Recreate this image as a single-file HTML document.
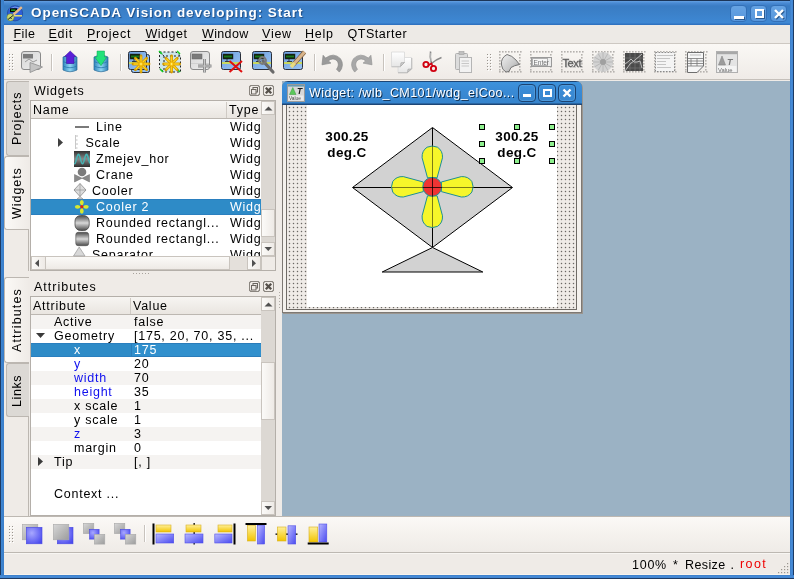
<!DOCTYPE html>
<html><head><meta charset="utf-8">
<style>
*{box-sizing:border-box;margin:0;padding:0}
html,body{width:794px;height:579px;overflow:hidden;background:#efebe7;font-family:"Liberation Sans",sans-serif;font-size:12px;color:#000}
.a{position:absolute}
.t{position:absolute;white-space:pre;line-height:14px;letter-spacing:0.75px;font-size:12.5px}
#titlebar{left:0;top:0;width:794px;height:25px;background:linear-gradient(#1c3558 0px,#1c3558 1px,#63a0e2 1px,#4a8ad4 3px,#3a7cc4 6px,#3b80c8 12px,#3e88d4 23px,#2f72c0 24px,#2f72c0 25px)}
#lborder{left:0;top:0;width:4px;height:579px;background:linear-gradient(90deg,#1d3a63 0,#1d3a63 1px,#3e86d2 1px,#3a7dc8 4px)}
#rborder{left:790px;top:0;width:4px;height:579px;background:linear-gradient(90deg,#3a7dc8 0,#4a8fdc 2px,#3a7dc8 3px,#1d3a63 3px)}
#bborder{left:0;top:575px;width:794px;height:4px;background:linear-gradient(#3a7dc8 0,#4a8fdc 2px,#3a7dc8 3px,#1d3a63 3px)}
.wbtn{position:absolute;top:5px;width:17px;height:17px;border:1px solid #3370b8;border-radius:4px;background:linear-gradient(#66a3e3,#5897dc)}
#title{left:31px;top:4px;font-weight:bold;font-size:13.5px;letter-spacing:0.95px;color:#fff;text-shadow:1px 1px 1px #1e4a80;line-height:18px}
#menubar{left:4px;top:25px;width:786px;height:18px;background:#edeae6}
#menuline{left:4px;top:43px;width:786px;height:1px;background:#cdc8c2}
#toolbar{left:4px;top:44px;width:786px;height:35px;background:linear-gradient(#faf8f5,#efebe7)}
#tbline{left:4px;top:79px;width:786px;height:1px;background:#c5c0ba}
#mdi{left:282px;top:81px;width:508px;height:435px;background:#9bb2c4}
.u{text-decoration:underline;text-underline-offset:2px}

.tab{position:absolute;border:1px solid #bcb7b1;border-right:none;border-radius:3px 0 0 3px}
.tabu{background:#dcd9d5}
.tabs{background:linear-gradient(90deg,#fbf9f6,#efebe7)}
.vt{position:absolute;white-space:pre;transform:rotate(-90deg);transform-origin:0 0;line-height:14px;letter-spacing:0.75px;font-size:12.5px}
.frame{position:absolute;border:1px solid #b4afa9;background:#fff}
.hdr{position:absolute;background:linear-gradient(#f7f5f2,#e9e5e0);border-bottom:1px solid #bcb7b1}
.sb{position:absolute;background:#dcd8d3}
.sbtn{position:absolute;background:linear-gradient(90deg,#fbfaf8,#eeeae6);border:1px solid #c9c4be}
.dbtn{position:absolute;width:11px;height:11px;border:1px solid #8a857f;border-radius:2px}
.row{position:absolute;left:31px;width:230px;height:16px}
.sel{background:#2e8bc7;color:#fff;box-shadow:inset 0 1px 0 #2a7fbf,inset 0 -1px 0 #2a7fbf}
.arow{position:absolute;left:31px;width:230px;height:14px}
.alt{background:#f5f3f1}
.blue{color:#1010ee}

.grid{background-color:#efebe7;background-image:radial-gradient(circle at 2.5px 2.5px,#6a6864 0.75px,transparent 1.05px);background-size:4px 4px}
.swb{position:absolute;top:84px;width:18px;height:18px;border:1px solid #1b4373;border-radius:4px;box-shadow:inset 0 0 0 1px #4d99dc}
</style></head><body><div id="root" style="position:absolute;left:0;top:0;width:794px;height:579px;overflow:hidden;will-change:transform;background:#efebe7">
<div class="a" id="titlebar"></div>
<div class="a" id="menubar"></div>
<div class="a" id="menuline"></div>
<div class="a" id="toolbar"></div>
<div class="a" id="tbline"></div>
<div class="a" id="mdi"></div>
<div class="a" id="lborder"></div>
<div class="a" id="rborder"></div>
<div class="a" id="bborder"></div>

<div class="t" id="title">OpenSCADA Vision developing: Start</div>
<div class="wbtn" style="left:730px"><div class="a" style="left:3px;top:10px;width:10px;height:3px;background:#fff;box-shadow:1px 1px 0 #2a5a90"></div></div>
<div class="wbtn" style="left:750px"><div class="a" style="left:4px;top:3px;width:9px;height:9px;border:2px solid #fff;box-shadow:1px 1px 0 #2a5a90"></div></div>
<div class="wbtn" style="left:770px"><svg class="a" style="left:0;top:0" width="17" height="17"><path d="M5 5L13 13M13 5L5 13" stroke="#2a5a90" stroke-width="2.4"/><path d="M4 4L12 12M12 4L4 12" stroke="#fff" stroke-width="2.4"/></svg></div>
<svg class="a" style="left:0;top:0" width="30" height="25">
<circle cx="15" cy="13.3" r="7.6" fill="#2f5fd8" stroke="#1a3a8a" stroke-width="0.6"/>
<path d="M9.5 9 Q15 5.6 20 8" stroke="#9ab4f0" stroke-width="1" fill="none" opacity="0.7"/>
<rect x="10" y="8.3" width="7" height="3.8" fill="#000"/><rect x="11" y="9.4" width="4.5" height="1.6" fill="#1c9a1c"/>
<path d="M13.5 14.5 L21.8 7.2" stroke="#e8b888" stroke-width="2.4"/>
<path d="M14 15.8 H22" stroke="#e8e070" stroke-width="1.5"/>
<circle cx="10.5" cy="17.3" r="3.6" fill="#c8d870" stroke="#6a7a30" stroke-width="0.5"/><path d="M8 19.5 L13 15.5 M10 17 L11.5 19" stroke="#222" stroke-width="1"/>
</svg>

<!-- TOOLBAR START --><svg class="a" style="left:0;top:0" width="794" height="80"><defs>
<linearGradient id="gblue" x1="0" y1="0" x2="1" y2="1"><stop offset="0" stop-color="#6a9fe0"/><stop offset="1" stop-color="#9cc4f2"/></linearGradient>
<linearGradient id="ggrey" x1="0" y1="0" x2="1" y2="1"><stop offset="0" stop-color="#d6d6d6"/><stop offset="1" stop-color="#eeeeee"/></linearGradient>
<radialGradient id="gstar"><stop offset="0" stop-color="#fffbd0"/><stop offset="0.4" stop-color="#ffd21a"/><stop offset="1" stop-color="#e0a000"/></radialGradient>
<linearGradient id="gcyl" x1="0" y1="0" x2="1" y2="0"><stop offset="0" stop-color="#2f86bd"/><stop offset="0.5" stop-color="#8fd6f4"/><stop offset="1" stop-color="#2f7fb5"/></linearGradient>
<linearGradient id="gbar" x1="0" y1="0" x2="1" y2="1"><stop offset="0" stop-color="#b8b8ff"/><stop offset="1" stop-color="#4a4af0"/></linearGradient>
<radialGradient id="gblu2" cx="0.35" cy="0.35" r="0.8"><stop offset="0" stop-color="#a8a8ff"/><stop offset="1" stop-color="#4848ee"/></radialGradient>
<linearGradient id="ggry2" x1="0" y1="0" x2="1" y2="1"><stop offset="0" stop-color="#d8d8d8"/><stop offset="1" stop-color="#9c9c9c"/></linearGradient>
<linearGradient id="gyel" x1="0" y1="0" x2="0" y2="1"><stop offset="0" stop-color="#fff09a"/><stop offset="1" stop-color="#f2c400"/></linearGradient>
</defs><rect x="9" y="54" width="1" height="1" fill="#9a958f"/><rect x="10" y="55" width="1" height="1" fill="#fff"/><rect x="12" y="54" width="1" height="1" fill="#9a958f"/><rect x="13" y="55" width="1" height="1" fill="#fff"/><rect x="9" y="57" width="1" height="1" fill="#9a958f"/><rect x="10" y="58" width="1" height="1" fill="#fff"/><rect x="12" y="57" width="1" height="1" fill="#9a958f"/><rect x="13" y="58" width="1" height="1" fill="#fff"/><rect x="9" y="60" width="1" height="1" fill="#9a958f"/><rect x="10" y="61" width="1" height="1" fill="#fff"/><rect x="12" y="60" width="1" height="1" fill="#9a958f"/><rect x="13" y="61" width="1" height="1" fill="#fff"/><rect x="9" y="63" width="1" height="1" fill="#9a958f"/><rect x="10" y="64" width="1" height="1" fill="#fff"/><rect x="12" y="63" width="1" height="1" fill="#9a958f"/><rect x="13" y="64" width="1" height="1" fill="#fff"/><rect x="9" y="66" width="1" height="1" fill="#9a958f"/><rect x="10" y="67" width="1" height="1" fill="#fff"/><rect x="12" y="66" width="1" height="1" fill="#9a958f"/><rect x="13" y="67" width="1" height="1" fill="#fff"/><rect x="9" y="69" width="1" height="1" fill="#9a958f"/><rect x="10" y="70" width="1" height="1" fill="#fff"/><rect x="12" y="69" width="1" height="1" fill="#9a958f"/><rect x="13" y="70" width="1" height="1" fill="#fff"/><rect x="21.5" y="51.5" width="19" height="18" rx="2.5" fill="url(#ggrey)" stroke="#8a8a8a"/><rect x="23" y="54" width="10" height="4.5" fill="#7c7c7c"/><path d="M25 62 L29 59 L33 62 L37 60" stroke="#9a9a9a" fill="none"/><path d="M30 62.5 L30 72.5 L42.5 67 Z" fill="#c4c4c4" stroke="#8e8e8e" stroke-width="0.8"/><rect x="51" y="54" width="1" height="17" fill="#c8c3bd"/><rect x="52" y="54" width="1" height="17" fill="#fff"/><path d="M63 57 Q70 53.5 77 57 L77 70 Q70 73.5 63 70 Z" fill="url(#gcyl)" stroke="#2a6a98" stroke-width="0.7"/><path d="M63 61.5 Q70 65 77 61.5 M63 66 Q70 69.5 77 66" stroke="#2a77ad" fill="none" stroke-width="0.8"/><path d="M70.2 51 L76 56.5 L74 56.5 L74 63.5 L66.5 63.5 L66.5 56.5 L64.5 56.5 Z" fill="#5a1fd8" stroke="#3a109a" stroke-width="0.5"/><path d="M94 57 Q101 53.5 108 57 L108 70 Q101 73.5 94 70 Z" fill="url(#gcyl)" stroke="#2a6a98" stroke-width="0.7"/><path d="M94 61.5 Q101 65 108 61.5 M94 66 Q101 69.5 108 66" stroke="#2a77ad" fill="none" stroke-width="0.8"/><path d="M97 51 L104.5 51 L104.5 57 L106.8 57 L101 65.7 L94.7 57 L97 57 Z" fill="#22e27a" stroke="#10a050" stroke-width="0.5"/><rect x="120" y="54" width="1" height="17" fill="#c8c3bd"/><rect x="121" y="54" width="1" height="17" fill="#fff"/><rect x="131.5" y="54.5" width="18" height="18" rx="2" fill="#8fbdf3" stroke="#2a2f3a"/><rect x="128.5" y="51.5" width="18" height="18" rx="2" fill="url(#gblue)" stroke="#2a2f3a"/><rect x="130" y="54" width="10" height="5" fill="#0a1a0a" stroke="#333" stroke-width="0.5"/><rect x="131" y="55.5" width="8" height="2" fill="#1fa01f" opacity="0.7"/><rect x="129" y="62" width="17" height="2" fill="#c8d860"/><path d="M134 59 V61.5 M132 61.5 H137" stroke="#222" stroke-width="0.8"/><path d="M133.00 64.00 L149.00 64.00" stroke="#d49a00" stroke-width="2.8" stroke-linecap="round"/><path d="M135.34 58.34 L146.66 69.66" stroke="#d49a00" stroke-width="2.8" stroke-linecap="round"/><path d="M141.00 56.00 L141.00 72.00" stroke="#d49a00" stroke-width="2.8" stroke-linecap="round"/><path d="M146.66 58.34 L135.34 69.66" stroke="#d49a00" stroke-width="2.8" stroke-linecap="round"/><path d="M134.00 64.00 L148.00 64.00" stroke="#ffd21a" stroke-width="1.3" stroke-linecap="round"/><path d="M136.05 59.05 L145.95 68.95" stroke="#ffd21a" stroke-width="1.3" stroke-linecap="round"/><path d="M141.00 57.00 L141.00 71.00" stroke="#ffd21a" stroke-width="1.3" stroke-linecap="round"/><path d="M145.95 59.05 L136.05 68.95" stroke="#ffd21a" stroke-width="1.3" stroke-linecap="round"/><circle cx="141" cy="64" r="2.6" fill="url(#gstar)"/><path d="M159.5 52 L176 52 L180.5 56 L180.5 72 L164 72 L159.5 68 Z" fill="#c6e3ea" opacity="0.9"/><path d="M159.5 52 L176 52 L180.5 56 L180.5 72 L164 72 L159.5 68 Z M159.5 52 L164 56 L180.5 56 M164 56 L164 72" fill="none" stroke="#222" stroke-dasharray="2 2" stroke-width="1"/><path d="M159 51 l3 3 M177 51 l3 3 M160 69 l3 3 M177 69 l3 3" stroke="#10d020" stroke-width="1.5"/><path d="M163.60 64.00 L179.60 64.00" stroke="#d49a00" stroke-width="2.8" stroke-linecap="round"/><path d="M165.94 58.34 L177.26 69.66" stroke="#d49a00" stroke-width="2.8" stroke-linecap="round"/><path d="M171.60 56.00 L171.60 72.00" stroke="#d49a00" stroke-width="2.8" stroke-linecap="round"/><path d="M177.26 58.34 L165.94 69.66" stroke="#d49a00" stroke-width="2.8" stroke-linecap="round"/><path d="M164.60 64.00 L178.60 64.00" stroke="#ffd21a" stroke-width="1.3" stroke-linecap="round"/><path d="M166.65 59.05 L176.55 68.95" stroke="#ffd21a" stroke-width="1.3" stroke-linecap="round"/><path d="M171.60 57.00 L171.60 71.00" stroke="#ffd21a" stroke-width="1.3" stroke-linecap="round"/><path d="M176.55 59.05 L166.65 68.95" stroke="#ffd21a" stroke-width="1.3" stroke-linecap="round"/><circle cx="171.6" cy="64" r="2.6" fill="url(#gstar)"/><rect x="190.5" y="51.5" width="19" height="18" rx="2.5" fill="url(#ggrey)" stroke="#8a8a8a"/><rect x="192" y="54" width="10" height="5" fill="#7a7a7a" stroke="#666" stroke-width="0.5"/><rect x="191" y="63" width="18" height="1" fill="#d0d0d0"/><path d="M204.5 59 V72.6 M198 66 H211.5" stroke="#8a8a8a" stroke-width="3"/><path d="M204.5 59 V72.6 M198 66 H211.5" stroke="#c8c8c8" stroke-width="1.2"/><rect x="221.5" y="51.5" width="19" height="18" rx="2" fill="url(#gblue)" stroke="#2a2f3a"/><rect x="223" y="54" width="10" height="5" fill="#0a1a0a" stroke="#333" stroke-width="0.5"/><rect x="224" y="55.5" width="8" height="2" fill="#1fa01f" opacity="0.7"/><rect x="222" y="62" width="18" height="2" fill="#c8d860"/><path d="M227 59 V61.5 M225 61.5 H230" stroke="#222" stroke-width="0.8"/><path d="M229.5 61 L242 72 M242 61 L229.5 72" stroke="#e01010" stroke-width="2"/><rect x="252.5" y="51.5" width="19" height="18" rx="2" fill="url(#gblue)" stroke="#2a2f3a"/><rect x="254" y="54" width="10" height="5" fill="#0a1a0a" stroke="#333" stroke-width="0.5"/><rect x="255" y="55.5" width="8" height="2" fill="#1fa01f" opacity="0.7"/><rect x="253" y="62" width="18" height="2" fill="#c8d860"/><path d="M258 59 V61.5 M256 61.5 H261" stroke="#222" stroke-width="0.8"/><path d="M263 61 L273 72" stroke="#6a6a6a" stroke-width="3.2" stroke-linecap="round"/><circle cx="262.5" cy="60.5" r="3.3" fill="none" stroke="#7a7a7a" stroke-width="2.2"/><rect x="283.5" y="51.5" width="19" height="18" rx="2" fill="url(#gblue)" stroke="#2a2f3a"/><rect x="285" y="54" width="10" height="5" fill="#0a1a0a" stroke="#333" stroke-width="0.5"/><rect x="286" y="55.5" width="8" height="2" fill="#1fa01f" opacity="0.7"/><rect x="284" y="62" width="18" height="2" fill="#c8d860"/><path d="M289 59 V61.5 M287 61.5 H292" stroke="#222" stroke-width="0.8"/><path d="M293 65 L304.5 52" stroke="#7a5a3a" stroke-width="4.2" stroke-linecap="butt"/><path d="M293 65 L304.5 52" stroke="#d9b48a" stroke-width="3"/><path d="M291 67 L294.5 63" stroke="#e8dc80" stroke-width="3.5"/><rect x="314" y="54" width="1" height="17" fill="#c8c3bd"/><rect x="315" y="54" width="1" height="17" fill="#fff"/><g transform="translate(331.5 62) scale(1.12) translate(-331.5 -62)"><path d="M324 56 L323 64.5 L331 63 L328.6 61 Q333 57.5 336.5 61 Q339 64.5 336 68.5 L338.5 71 Q343.5 65 339.5 59 Q333.5 53 326.2 58.5 Z" fill="#9a9a9a" stroke="#878787" stroke-width="0.6"/></g><g transform="translate(362.5 62) scale(1.12) translate(-362.5 -62)"><path d="M370 56 L371 64.5 L363 63 L365.4 61 Q361 57.5 357.5 61 Q355 64.5 358 68.5 L355.5 71 Q350.5 65 354.5 59 Q360.5 53 367.8 58.5 Z" fill="#a8a8a8" stroke="#949494" stroke-width="0.6"/></g><rect x="383" y="54" width="1" height="17" fill="#c8c3bd"/><rect x="384" y="54" width="1" height="17" fill="#fff"/><defs><linearGradient id="gsheet" x1="0" y1="0" x2="0" y2="1"><stop offset="0" stop-color="#ffffff"/><stop offset="1" stop-color="#e6e6e6"/></linearGradient></defs><path d="M398 57.5 H411.5 V69 L407.5 72.5 H398 Z" fill="url(#gsheet)" stroke="#d8d8d8" stroke-width="0.8"/><path d="M407.5 72.5 L408 69.2 L411.5 69 Z" fill="#cfcfcf" stroke="#9a9a9a" stroke-width="0.6"/><path d="M398 72.8 H407.5 M411.8 58 V69" stroke="#b8b8b8"/><path d="M391.5 52 H404.5 V62.5 L400.5 66.5 H391.5 Z" fill="url(#gsheet)" stroke="#d8d8d8" stroke-width="0.8"/><path d="M400.5 66.5 L401 62.8 L404.5 62.5 Z" fill="#cfcfcf" stroke="#9a9a9a" stroke-width="0.6"/><path d="M391.5 66.8 H400.5" stroke="#c0c0c0"/><path d="M430.6 51.5 Q429.5 57 431.5 63.5" stroke="#8a8a8a" stroke-width="1.6" fill="none"/><path d="M441.5 57.5 Q436 59.5 431.5 63.5" stroke="#8a8a8a" stroke-width="1.5" fill="none"/><path d="M430.9 53 Q430.4 57 431.2 61" stroke="#e8e8e8" stroke-width="0.6" fill="none"/><circle cx="426" cy="64.5" r="2.6" fill="none" stroke="#d00010" stroke-width="1.9"/><circle cx="433.5" cy="68.5" r="2.6" fill="none" stroke="#d00010" stroke-width="1.9"/><path d="M428 65.5 L431.5 63.5 L432.5 66" stroke="#d00010" stroke-width="1.6" fill="none"/><rect x="455.5" y="53.5" width="12" height="16" rx="1" fill="#dcdcdc" stroke="#b0b0b0"/><rect x="459" y="51.5" width="5" height="3" fill="#c0c0c0" stroke="#a0a0a0" stroke-width="0.6"/><rect x="459.5" y="57.5" width="12" height="15" fill="#f2f2f2" stroke="#b5b5b5"/><path d="M461.5 61 H469 M461.5 63.5 H469 M461.5 66 H469" stroke="#c8c8c8"/><rect x="487" y="54" width="1" height="1" fill="#9a958f"/><rect x="488" y="55" width="1" height="1" fill="#fff"/><rect x="490" y="54" width="1" height="1" fill="#9a958f"/><rect x="491" y="55" width="1" height="1" fill="#fff"/><rect x="487" y="57" width="1" height="1" fill="#9a958f"/><rect x="488" y="58" width="1" height="1" fill="#fff"/><rect x="490" y="57" width="1" height="1" fill="#9a958f"/><rect x="491" y="58" width="1" height="1" fill="#fff"/><rect x="487" y="60" width="1" height="1" fill="#9a958f"/><rect x="488" y="61" width="1" height="1" fill="#fff"/><rect x="490" y="60" width="1" height="1" fill="#9a958f"/><rect x="491" y="61" width="1" height="1" fill="#fff"/><rect x="487" y="63" width="1" height="1" fill="#9a958f"/><rect x="488" y="64" width="1" height="1" fill="#fff"/><rect x="490" y="63" width="1" height="1" fill="#9a958f"/><rect x="491" y="64" width="1" height="1" fill="#fff"/><rect x="487" y="66" width="1" height="1" fill="#9a958f"/><rect x="488" y="67" width="1" height="1" fill="#fff"/><rect x="490" y="66" width="1" height="1" fill="#9a958f"/><rect x="491" y="67" width="1" height="1" fill="#fff"/><rect x="487" y="69" width="1" height="1" fill="#9a958f"/><rect x="488" y="70" width="1" height="1" fill="#fff"/><rect x="490" y="69" width="1" height="1" fill="#9a958f"/><rect x="491" y="70" width="1" height="1" fill="#fff"/><rect x="499" y="51" width="1.6" height="1.6" fill="#b5b2ae"/><rect x="499" y="71" width="1.6" height="1.6" fill="#b5b2ae"/><rect x="502" y="51" width="1.6" height="1.6" fill="#b5b2ae"/><rect x="502" y="71" width="1.6" height="1.6" fill="#b5b2ae"/><rect x="505" y="51" width="1.6" height="1.6" fill="#b5b2ae"/><rect x="505" y="71" width="1.6" height="1.6" fill="#b5b2ae"/><rect x="508" y="51" width="1.6" height="1.6" fill="#b5b2ae"/><rect x="508" y="71" width="1.6" height="1.6" fill="#b5b2ae"/><rect x="511" y="51" width="1.6" height="1.6" fill="#b5b2ae"/><rect x="511" y="71" width="1.6" height="1.6" fill="#b5b2ae"/><rect x="514" y="51" width="1.6" height="1.6" fill="#b5b2ae"/><rect x="514" y="71" width="1.6" height="1.6" fill="#b5b2ae"/><rect x="517" y="51" width="1.6" height="1.6" fill="#b5b2ae"/><rect x="517" y="71" width="1.6" height="1.6" fill="#b5b2ae"/><rect x="520" y="51" width="1.6" height="1.6" fill="#b5b2ae"/><rect x="520" y="71" width="1.6" height="1.6" fill="#b5b2ae"/><rect x="499" y="54" width="1.6" height="1.6" fill="#b5b2ae"/><rect x="519" y="54" width="1.6" height="1.6" fill="#b5b2ae"/><rect x="499" y="57" width="1.6" height="1.6" fill="#b5b2ae"/><rect x="519" y="57" width="1.6" height="1.6" fill="#b5b2ae"/><rect x="499" y="60" width="1.6" height="1.6" fill="#b5b2ae"/><rect x="519" y="60" width="1.6" height="1.6" fill="#b5b2ae"/><rect x="499" y="63" width="1.6" height="1.6" fill="#b5b2ae"/><rect x="519" y="63" width="1.6" height="1.6" fill="#b5b2ae"/><rect x="499" y="66" width="1.6" height="1.6" fill="#b5b2ae"/><rect x="519" y="66" width="1.6" height="1.6" fill="#b5b2ae"/><rect x="499" y="69" width="1.6" height="1.6" fill="#b5b2ae"/><rect x="519" y="69" width="1.6" height="1.6" fill="#b5b2ae"/><rect x="530" y="51" width="1.6" height="1.6" fill="#b5b2ae"/><rect x="530" y="71" width="1.6" height="1.6" fill="#b5b2ae"/><rect x="533" y="51" width="1.6" height="1.6" fill="#b5b2ae"/><rect x="533" y="71" width="1.6" height="1.6" fill="#b5b2ae"/><rect x="536" y="51" width="1.6" height="1.6" fill="#b5b2ae"/><rect x="536" y="71" width="1.6" height="1.6" fill="#b5b2ae"/><rect x="539" y="51" width="1.6" height="1.6" fill="#b5b2ae"/><rect x="539" y="71" width="1.6" height="1.6" fill="#b5b2ae"/><rect x="542" y="51" width="1.6" height="1.6" fill="#b5b2ae"/><rect x="542" y="71" width="1.6" height="1.6" fill="#b5b2ae"/><rect x="545" y="51" width="1.6" height="1.6" fill="#b5b2ae"/><rect x="545" y="71" width="1.6" height="1.6" fill="#b5b2ae"/><rect x="548" y="51" width="1.6" height="1.6" fill="#b5b2ae"/><rect x="548" y="71" width="1.6" height="1.6" fill="#b5b2ae"/><rect x="551" y="51" width="1.6" height="1.6" fill="#b5b2ae"/><rect x="551" y="71" width="1.6" height="1.6" fill="#b5b2ae"/><rect x="530" y="54" width="1.6" height="1.6" fill="#b5b2ae"/><rect x="550" y="54" width="1.6" height="1.6" fill="#b5b2ae"/><rect x="530" y="57" width="1.6" height="1.6" fill="#b5b2ae"/><rect x="550" y="57" width="1.6" height="1.6" fill="#b5b2ae"/><rect x="530" y="60" width="1.6" height="1.6" fill="#b5b2ae"/><rect x="550" y="60" width="1.6" height="1.6" fill="#b5b2ae"/><rect x="530" y="63" width="1.6" height="1.6" fill="#b5b2ae"/><rect x="550" y="63" width="1.6" height="1.6" fill="#b5b2ae"/><rect x="530" y="66" width="1.6" height="1.6" fill="#b5b2ae"/><rect x="550" y="66" width="1.6" height="1.6" fill="#b5b2ae"/><rect x="530" y="69" width="1.6" height="1.6" fill="#b5b2ae"/><rect x="550" y="69" width="1.6" height="1.6" fill="#b5b2ae"/><rect x="561" y="51" width="1.6" height="1.6" fill="#b5b2ae"/><rect x="561" y="71" width="1.6" height="1.6" fill="#b5b2ae"/><rect x="564" y="51" width="1.6" height="1.6" fill="#b5b2ae"/><rect x="564" y="71" width="1.6" height="1.6" fill="#b5b2ae"/><rect x="567" y="51" width="1.6" height="1.6" fill="#b5b2ae"/><rect x="567" y="71" width="1.6" height="1.6" fill="#b5b2ae"/><rect x="570" y="51" width="1.6" height="1.6" fill="#b5b2ae"/><rect x="570" y="71" width="1.6" height="1.6" fill="#b5b2ae"/><rect x="573" y="51" width="1.6" height="1.6" fill="#b5b2ae"/><rect x="573" y="71" width="1.6" height="1.6" fill="#b5b2ae"/><rect x="576" y="51" width="1.6" height="1.6" fill="#b5b2ae"/><rect x="576" y="71" width="1.6" height="1.6" fill="#b5b2ae"/><rect x="579" y="51" width="1.6" height="1.6" fill="#b5b2ae"/><rect x="579" y="71" width="1.6" height="1.6" fill="#b5b2ae"/><rect x="582" y="51" width="1.6" height="1.6" fill="#b5b2ae"/><rect x="582" y="71" width="1.6" height="1.6" fill="#b5b2ae"/><rect x="561" y="54" width="1.6" height="1.6" fill="#b5b2ae"/><rect x="581" y="54" width="1.6" height="1.6" fill="#b5b2ae"/><rect x="561" y="57" width="1.6" height="1.6" fill="#b5b2ae"/><rect x="581" y="57" width="1.6" height="1.6" fill="#b5b2ae"/><rect x="561" y="60" width="1.6" height="1.6" fill="#b5b2ae"/><rect x="581" y="60" width="1.6" height="1.6" fill="#b5b2ae"/><rect x="561" y="63" width="1.6" height="1.6" fill="#b5b2ae"/><rect x="581" y="63" width="1.6" height="1.6" fill="#b5b2ae"/><rect x="561" y="66" width="1.6" height="1.6" fill="#b5b2ae"/><rect x="581" y="66" width="1.6" height="1.6" fill="#b5b2ae"/><rect x="561" y="69" width="1.6" height="1.6" fill="#b5b2ae"/><rect x="581" y="69" width="1.6" height="1.6" fill="#b5b2ae"/><rect x="592" y="51" width="1.6" height="1.6" fill="#b5b2ae"/><rect x="592" y="71" width="1.6" height="1.6" fill="#b5b2ae"/><rect x="595" y="51" width="1.6" height="1.6" fill="#b5b2ae"/><rect x="595" y="71" width="1.6" height="1.6" fill="#b5b2ae"/><rect x="598" y="51" width="1.6" height="1.6" fill="#b5b2ae"/><rect x="598" y="71" width="1.6" height="1.6" fill="#b5b2ae"/><rect x="601" y="51" width="1.6" height="1.6" fill="#b5b2ae"/><rect x="601" y="71" width="1.6" height="1.6" fill="#b5b2ae"/><rect x="604" y="51" width="1.6" height="1.6" fill="#b5b2ae"/><rect x="604" y="71" width="1.6" height="1.6" fill="#b5b2ae"/><rect x="607" y="51" width="1.6" height="1.6" fill="#b5b2ae"/><rect x="607" y="71" width="1.6" height="1.6" fill="#b5b2ae"/><rect x="610" y="51" width="1.6" height="1.6" fill="#b5b2ae"/><rect x="610" y="71" width="1.6" height="1.6" fill="#b5b2ae"/><rect x="613" y="51" width="1.6" height="1.6" fill="#b5b2ae"/><rect x="613" y="71" width="1.6" height="1.6" fill="#b5b2ae"/><rect x="592" y="54" width="1.6" height="1.6" fill="#b5b2ae"/><rect x="612" y="54" width="1.6" height="1.6" fill="#b5b2ae"/><rect x="592" y="57" width="1.6" height="1.6" fill="#b5b2ae"/><rect x="612" y="57" width="1.6" height="1.6" fill="#b5b2ae"/><rect x="592" y="60" width="1.6" height="1.6" fill="#b5b2ae"/><rect x="612" y="60" width="1.6" height="1.6" fill="#b5b2ae"/><rect x="592" y="63" width="1.6" height="1.6" fill="#b5b2ae"/><rect x="612" y="63" width="1.6" height="1.6" fill="#b5b2ae"/><rect x="592" y="66" width="1.6" height="1.6" fill="#b5b2ae"/><rect x="612" y="66" width="1.6" height="1.6" fill="#b5b2ae"/><rect x="592" y="69" width="1.6" height="1.6" fill="#b5b2ae"/><rect x="612" y="69" width="1.6" height="1.6" fill="#b5b2ae"/><rect x="623" y="51" width="1.6" height="1.6" fill="#b5b2ae"/><rect x="623" y="71" width="1.6" height="1.6" fill="#b5b2ae"/><rect x="626" y="51" width="1.6" height="1.6" fill="#b5b2ae"/><rect x="626" y="71" width="1.6" height="1.6" fill="#b5b2ae"/><rect x="629" y="51" width="1.6" height="1.6" fill="#b5b2ae"/><rect x="629" y="71" width="1.6" height="1.6" fill="#b5b2ae"/><rect x="632" y="51" width="1.6" height="1.6" fill="#b5b2ae"/><rect x="632" y="71" width="1.6" height="1.6" fill="#b5b2ae"/><rect x="635" y="51" width="1.6" height="1.6" fill="#b5b2ae"/><rect x="635" y="71" width="1.6" height="1.6" fill="#b5b2ae"/><rect x="638" y="51" width="1.6" height="1.6" fill="#b5b2ae"/><rect x="638" y="71" width="1.6" height="1.6" fill="#b5b2ae"/><rect x="641" y="51" width="1.6" height="1.6" fill="#b5b2ae"/><rect x="641" y="71" width="1.6" height="1.6" fill="#b5b2ae"/><rect x="644" y="51" width="1.6" height="1.6" fill="#b5b2ae"/><rect x="644" y="71" width="1.6" height="1.6" fill="#b5b2ae"/><rect x="623" y="54" width="1.6" height="1.6" fill="#b5b2ae"/><rect x="643" y="54" width="1.6" height="1.6" fill="#b5b2ae"/><rect x="623" y="57" width="1.6" height="1.6" fill="#b5b2ae"/><rect x="643" y="57" width="1.6" height="1.6" fill="#b5b2ae"/><rect x="623" y="60" width="1.6" height="1.6" fill="#b5b2ae"/><rect x="643" y="60" width="1.6" height="1.6" fill="#b5b2ae"/><rect x="623" y="63" width="1.6" height="1.6" fill="#b5b2ae"/><rect x="643" y="63" width="1.6" height="1.6" fill="#b5b2ae"/><rect x="623" y="66" width="1.6" height="1.6" fill="#b5b2ae"/><rect x="643" y="66" width="1.6" height="1.6" fill="#b5b2ae"/><rect x="623" y="69" width="1.6" height="1.6" fill="#b5b2ae"/><rect x="643" y="69" width="1.6" height="1.6" fill="#b5b2ae"/><rect x="654" y="51" width="1.6" height="1.6" fill="#b5b2ae"/><rect x="654" y="71" width="1.6" height="1.6" fill="#b5b2ae"/><rect x="657" y="51" width="1.6" height="1.6" fill="#b5b2ae"/><rect x="657" y="71" width="1.6" height="1.6" fill="#b5b2ae"/><rect x="660" y="51" width="1.6" height="1.6" fill="#b5b2ae"/><rect x="660" y="71" width="1.6" height="1.6" fill="#b5b2ae"/><rect x="663" y="51" width="1.6" height="1.6" fill="#b5b2ae"/><rect x="663" y="71" width="1.6" height="1.6" fill="#b5b2ae"/><rect x="666" y="51" width="1.6" height="1.6" fill="#b5b2ae"/><rect x="666" y="71" width="1.6" height="1.6" fill="#b5b2ae"/><rect x="669" y="51" width="1.6" height="1.6" fill="#b5b2ae"/><rect x="669" y="71" width="1.6" height="1.6" fill="#b5b2ae"/><rect x="672" y="51" width="1.6" height="1.6" fill="#b5b2ae"/><rect x="672" y="71" width="1.6" height="1.6" fill="#b5b2ae"/><rect x="675" y="51" width="1.6" height="1.6" fill="#b5b2ae"/><rect x="675" y="71" width="1.6" height="1.6" fill="#b5b2ae"/><rect x="654" y="54" width="1.6" height="1.6" fill="#b5b2ae"/><rect x="674" y="54" width="1.6" height="1.6" fill="#b5b2ae"/><rect x="654" y="57" width="1.6" height="1.6" fill="#b5b2ae"/><rect x="674" y="57" width="1.6" height="1.6" fill="#b5b2ae"/><rect x="654" y="60" width="1.6" height="1.6" fill="#b5b2ae"/><rect x="674" y="60" width="1.6" height="1.6" fill="#b5b2ae"/><rect x="654" y="63" width="1.6" height="1.6" fill="#b5b2ae"/><rect x="674" y="63" width="1.6" height="1.6" fill="#b5b2ae"/><rect x="654" y="66" width="1.6" height="1.6" fill="#b5b2ae"/><rect x="674" y="66" width="1.6" height="1.6" fill="#b5b2ae"/><rect x="654" y="69" width="1.6" height="1.6" fill="#b5b2ae"/><rect x="674" y="69" width="1.6" height="1.6" fill="#b5b2ae"/><rect x="685" y="51" width="1.6" height="1.6" fill="#b5b2ae"/><rect x="685" y="71" width="1.6" height="1.6" fill="#b5b2ae"/><rect x="688" y="51" width="1.6" height="1.6" fill="#b5b2ae"/><rect x="688" y="71" width="1.6" height="1.6" fill="#b5b2ae"/><rect x="691" y="51" width="1.6" height="1.6" fill="#b5b2ae"/><rect x="691" y="71" width="1.6" height="1.6" fill="#b5b2ae"/><rect x="694" y="51" width="1.6" height="1.6" fill="#b5b2ae"/><rect x="694" y="71" width="1.6" height="1.6" fill="#b5b2ae"/><rect x="697" y="51" width="1.6" height="1.6" fill="#b5b2ae"/><rect x="697" y="71" width="1.6" height="1.6" fill="#b5b2ae"/><rect x="700" y="51" width="1.6" height="1.6" fill="#b5b2ae"/><rect x="700" y="71" width="1.6" height="1.6" fill="#b5b2ae"/><rect x="703" y="51" width="1.6" height="1.6" fill="#b5b2ae"/><rect x="703" y="71" width="1.6" height="1.6" fill="#b5b2ae"/><rect x="706" y="51" width="1.6" height="1.6" fill="#b5b2ae"/><rect x="706" y="71" width="1.6" height="1.6" fill="#b5b2ae"/><rect x="685" y="54" width="1.6" height="1.6" fill="#b5b2ae"/><rect x="705" y="54" width="1.6" height="1.6" fill="#b5b2ae"/><rect x="685" y="57" width="1.6" height="1.6" fill="#b5b2ae"/><rect x="705" y="57" width="1.6" height="1.6" fill="#b5b2ae"/><rect x="685" y="60" width="1.6" height="1.6" fill="#b5b2ae"/><rect x="705" y="60" width="1.6" height="1.6" fill="#b5b2ae"/><rect x="685" y="63" width="1.6" height="1.6" fill="#b5b2ae"/><rect x="705" y="63" width="1.6" height="1.6" fill="#b5b2ae"/><rect x="685" y="66" width="1.6" height="1.6" fill="#b5b2ae"/><rect x="705" y="66" width="1.6" height="1.6" fill="#b5b2ae"/><rect x="685" y="69" width="1.6" height="1.6" fill="#b5b2ae"/><rect x="705" y="69" width="1.6" height="1.6" fill="#b5b2ae"/><defs><linearGradient id="gfig" x1="0" y1="0" x2="1" y2="1"><stop offset="0" stop-color="#f0f0f0"/><stop offset="0.6" stop-color="#c8c8c8"/><stop offset="1" stop-color="#8a8a8a"/></linearGradient></defs><path d="M507 54.5 Q500.5 58 501.5 65 Q502 70 506 72 L509 71.5 L511 67.5 Q514 65.5 519.5 64.5 L516 60 Q512 55.5 507 54.5 Z" fill="url(#gfig)" stroke="#6a6a6a" stroke-width="0.9"/><rect x="531.5" y="57.5" width="20" height="9" fill="#ececec" stroke="#9a9a9a"/><rect x="532.5" y="58.5" width="15" height="7" fill="#f6f6f6" stroke="#b0b0b0"/><text x="533.5" y="64.5" font-size="6.5" font-family="Liberation Sans" fill="#707070">Enter</text><text x="563.5" y="67.5" font-size="11" font-family="Liberation Sans" fill="#c8c8c8" letter-spacing="-0.4">Text</text><text x="562.5" y="66.5" font-size="11" font-family="Liberation Sans" fill="#5e5e5e" letter-spacing="-0.4" stroke="#5e5e5e" stroke-width="0.3">Text</text><circle cx="603" cy="62" r="10" fill="#d2d2d2"/><g stroke="#b8b8b8" stroke-width="1"><path d="M603 62 L613.00 62.00"/><path d="M603 62 L611.66 67.00"/><path d="M603 62 L608.00 70.66"/><path d="M603 62 L603.00 72.00"/><path d="M603 62 L598.00 70.66"/><path d="M603 62 L594.34 67.00"/><path d="M603 62 L593.00 62.00"/><path d="M603 62 L594.34 57.00"/><path d="M603 62 L598.00 53.34"/><path d="M603 62 L603.00 52.00"/><path d="M603 62 L608.00 53.34"/><path d="M603 62 L611.66 57.00"/></g><circle cx="603" cy="62" r="3" fill="#a0a0a0"/><rect x="625" y="53" width="18" height="18" fill="#4a4a4a"/><path d="M630 53 V71 M635 53 V71 M640 53 V71 M625 58 H643 M625 63 H643 M625 68 H643" stroke="#7a7a7a" stroke-width="0.6"/><path d="M625 64 L629 61 L631 59 L634 62 L637 62 L640 61 L642 68 M625 71 L630 64 L635 60 L642 54" stroke="#c8c8c8" stroke-width="0.9" fill="none"/><rect x="655.5" y="52.5" width="19" height="19" fill="#f4f4f4" stroke="#8a8a8a" stroke-dasharray="1.6 1.4"/><path d="M657 55.5 H673 M657 58.5 H670 M657 61.5 H666 M657 64.5 H666 M657 67.5 H671" stroke="#c4c4c4" stroke-width="1.2"/><path d="M687.5 52.5 H703.5 V66 L697 72.5 H687.5 Z" fill="#f6f6f6" stroke="#6e6e6e"/><path d="M688 58.5 H703 M688 61 H703 M688 63.5 H703 M688 66 H703 M691 58.5 V66 M697 58.5 V66" stroke="#777" stroke-width="0.8"/><path d="M690 55 H701" stroke="#bbb"/><rect x="716.5" y="51.5" width="21" height="21" fill="#e4e4e4" stroke="#b0b0b0"/><rect x="717" y="52" width="20" height="2.2" fill="#a8a8a8"/><path d="M718.5 65 L722 56 L725.5 65 Z" fill="#9c9c9c" stroke="#888" stroke-width="0.6"/><text x="727" y="64.5" font-size="9" font-weight="bold" font-style="italic" font-family="Liberation Sans" fill="#7c7c7c">T</text><rect x="717.5" y="66" width="19" height="6" fill="#f4f4f4"/><text x="718" y="71.5" font-size="5.8" font-family="Liberation Sans" fill="#6a6a6a">Value</text></svg><!-- TOOLBAR END -->
<!-- menu -->
<div class="t" style="left:13.5px;top:27px;letter-spacing:0.4px"><span class="u">F</span>ile</div>
<div class="t" style="left:48.5px;top:27px"><span class="u">E</span>dit</div>
<div class="t" style="left:87px;top:27px"><span class="u">P</span>roject</div>
<div class="t" style="left:145.5px;top:27px;letter-spacing:0.5px"><span class="u">W</span>idget</div>
<div class="t" style="left:202px;top:27px;letter-spacing:0.35px"><span class="u">W</span>indow</div>
<div class="t" style="left:262px;top:27px"><span class="u">V</span>iew</div>
<div class="t" style="left:305px;top:27px"><span class="u">H</span>elp</div>
<div class="t" style="left:347.5px;top:27px;letter-spacing:0.55px">QTStarter</div>


<!-- ===== top dock tabs ===== -->
<div class="tab tabu" style="left:6px;top:81px;width:23px;height:75px"></div>
<div class="tab tabs" style="left:4px;top:156px;width:25px;height:74px"></div>
<div class="a" style="left:28px;top:229px;width:1px;height:42px;background:#bcb7b1"></div>
<div class="vt" style="left:10px;top:145px;letter-spacing:1.05px">Projects</div>
<div class="vt" style="left:10px;top:219px;letter-spacing:0.95px">Widgets</div>

<!-- Widgets dock -->
<div class="t" style="left:34px;top:84px">Widgets</div>
<div class="dbtn" style="left:249px;top:85px"></div>
<div class="dbtn" style="left:263px;top:85px"></div>
<div class="frame" style="left:30px;top:100px;width:246px;height:171px"></div>
<div class="hdr" style="left:31px;top:101px;width:230px;height:18px"></div>
<div class="a" style="left:226px;top:102px;width:1px;height:16px;background:#cfcac4"></div>
<div class="t" style="left:33px;top:103px">Name</div>
<div class="t" style="left:229px;top:103px">Type</div>
<div class="sb" style="left:261px;top:101px;width:14px;height:155px"></div>
<div class="sbtn" style="left:261px;top:101px;width:14px;height:14px"></div>
<div class="sbtn" style="left:261px;top:209px;width:14px;height:28px"></div>
<div class="sbtn" style="left:261px;top:242px;width:14px;height:14px"></div>
<div class="sb" style="left:31px;top:256px;width:230px;height:14px;background:#e4e0db"></div>
<div class="sbtn" style="left:31px;top:256px;width:14px;height:14px;border-right:none"></div>
<div class="sbtn" style="left:45px;top:256px;width:185px;height:14px;background:linear-gradient(#fbfaf8,#eeeae6)"></div>
<div class="sbtn" style="left:247px;top:256px;width:14px;height:14px"></div>
<div class="a" style="left:261px;top:256px;width:14px;height:14px;background:#efebe7;border-left:1px solid #c9c4be;border-top:1px solid #c9c4be"></div>

<div class="row sel" style="top:199px"></div>
<div class="t" style="left:96px;top:120px">Line</div>
<div class="t" style="left:85.5px;top:136px">Scale</div>
<div class="t" style="left:96px;top:152px">Zmejev_hor</div>
<div class="t" style="left:96px;top:168px">Crane</div>
<div class="t" style="left:92px;top:184px">Cooler</div>
<div class="t" style="left:96px;top:200px;color:#fff">Cooler 2</div>
<div class="t" style="left:96px;top:216px">Rounded rectangl...</div>
<div class="t" style="left:96px;top:232px">Rounded rectangl...</div>
<div class="a" style="left:31px;top:247px;width:230px;height:9px;overflow:hidden"><div class="t" style="left:61px;top:1px">Separator</div><div class="t" style="left:199px;top:1px">Widg</div></div>
<div class="a" style="left:229px;top:118px;width:32px;height:129px;overflow:hidden">
<div class="t" style="left:1px;top:2px">Widg</div>
<div class="t" style="left:1px;top:18px">Widg</div>
<div class="t" style="left:1px;top:34px">Widg</div>
<div class="t" style="left:1px;top:50px">Widg</div>
<div class="t" style="left:1px;top:66px">Widg</div>
<div class="t" style="left:1px;top:82px;color:#fff">Widg</div>
<div class="t" style="left:1px;top:98px">Widg</div>
<div class="t" style="left:1px;top:114px">Widg</div>
</div>

<!-- splitter dots -->
<div class="a" style="left:133px;top:273px;width:17px;height:1px;background:repeating-linear-gradient(90deg,#a8a39d 0 1px,transparent 1px 3px)"></div>

<!-- ===== bottom dock tabs ===== -->
<div class="tab tabs" style="left:4px;top:277px;width:25px;height:86px"></div>
<div class="tab tabu" style="left:6px;top:363px;width:23px;height:54px"></div>
<div class="a" style="left:28px;top:416px;width:1px;height:100px;background:#bcb7b1"></div>
<div class="vt" style="left:10px;top:352px;letter-spacing:1.1px">Attributes</div>
<div class="vt" style="left:10px;top:406.5px;letter-spacing:0.6px">Links</div>

<!-- Attributes dock -->
<div class="t" style="left:34px;top:280px;letter-spacing:1px">Attributes</div>
<div class="dbtn" style="left:249px;top:281px"></div>
<div class="dbtn" style="left:263px;top:281px"></div>
<div class="frame" style="left:30px;top:296px;width:246px;height:220px"></div>
<div class="hdr" style="left:31px;top:297px;width:230px;height:18px"></div>
<div class="a" style="left:130px;top:298px;width:1px;height:16px;background:#cfcac4"></div>
<div class="t" style="left:33px;top:299px">Attribute</div>
<div class="t" style="left:133px;top:299px">Value</div>
<div class="arow alt" style="top:315px"></div>
<div class="arow sel" style="top:343px"></div><div class="a" style="left:131px;top:343px;width:130px;height:14px;background:#3190cd;border:1px solid #2a7cba;border-right:none"></div>
<div class="arow alt" style="top:371px"></div>
<div class="arow alt" style="top:399px"></div>
<div class="arow alt" style="top:427px"></div>
<div class="arow alt" style="top:455px"></div>
<div class="t" style="left:54px;top:315px">Active</div>
<div class="t" style="left:54px;top:329px">Geometry</div>
<div class="t" style="left:74px;top:343px;color:#fff">x</div>
<div class="t blue" style="left:74px;top:357px">y</div>
<div class="t blue" style="left:74px;top:371px">width</div>
<div class="t blue" style="left:74px;top:385px">height</div>
<div class="t" style="left:74px;top:399px">x scale</div>
<div class="t" style="left:74px;top:413px">y scale</div>
<div class="t blue" style="left:74px;top:427px">z</div>
<div class="t" style="left:74px;top:441px">margin</div>
<div class="t" style="left:54px;top:455px">Tip</div>
<div class="t" style="left:54px;top:487px">Context ...</div>
<div class="t" style="left:134px;top:315px">false</div>
<div class="t" style="left:134px;top:329px">[175, 20, 70, 35, ...</div>
<div class="t" style="left:134px;top:343px;color:#fff">175</div>
<div class="t" style="left:134px;top:357px">20</div>
<div class="t" style="left:134px;top:371px">70</div>
<div class="t" style="left:134px;top:385px">35</div>
<div class="t" style="left:134px;top:399px">1</div>
<div class="t" style="left:134px;top:413px">1</div>
<div class="t" style="left:134px;top:427px">3</div>
<div class="t" style="left:134px;top:441px">0</div>
<div class="t" style="left:134px;top:455px">[, ]</div>
<div class="sb" style="left:261px;top:297px;width:14px;height:218px"></div>
<div class="sbtn" style="left:261px;top:297px;width:14px;height:14px"></div>
<div class="sbtn" style="left:261px;top:362px;width:14px;height:58px"></div>
<div class="sbtn" style="left:261px;top:501px;width:14px;height:14px"></div>

<!-- dock vertical splitter dots -->
<div class="a" style="left:279px;top:292px;width:1px;height:17px;background:repeating-linear-gradient(#b0aba5 0 1px,transparent 1px 3px)"></div>


<!-- DOCK START --><svg class="a" style="left:0;top:0" width="794" height="579"><defs>
<linearGradient id="gzm" x1="0" y1="0" x2="0" y2="1"><stop offset="0" stop-color="#2e2e2e"/><stop offset="0.5" stop-color="#8a8a8a"/><stop offset="1" stop-color="#2e2e2e"/></linearGradient>
<linearGradient id="grr" x1="0" y1="0" x2="0" y2="1"><stop offset="0" stop-color="#4a4a4a"/><stop offset="0.5" stop-color="#d8d8d8"/><stop offset="1" stop-color="#4a4a4a"/></linearGradient>
</defs><rect x="75" y="126" width="14" height="2" fill="#7a7a7a"/><path d="M58 138 L63 142.5 L58 147 Z" fill="#404040"/><path d="M75.5 135 V149" stroke="#c8c8c8" stroke-width="1"/><path d="M76 136 H78 M76 140 H77.5 M76 144 H78 M76 148 H77.5" stroke="#b0b0b0" stroke-width="0.8"/><svg x="74" y="151" width="16" height="16" viewBox="74 151 16 16"><rect x="74" y="151" width="16" height="16" fill="url(#gzm)"/><polyline points="74.00,163.26 74.25,163.51 74.50,163.60 74.75,163.51 75.00,163.24 75.25,162.82 75.50,162.24 75.75,161.54 76.00,160.75 76.25,159.88 76.50,158.98 76.75,158.09 77.00,157.22 77.25,156.43 77.50,155.74 77.75,155.17 78.00,154.74 78.25,154.49 78.50,154.40 78.75,154.49 79.00,154.76 79.25,155.18 79.50,155.76 79.75,156.46 80.00,157.25 80.25,158.12 80.50,159.02 80.75,159.91 81.00,160.78 81.25,161.57 81.50,162.26 81.75,162.83 82.00,163.26 82.25,163.51 82.50,163.60 82.75,163.51 83.00,163.24 83.25,162.82 83.50,162.24 83.75,161.54 84.00,160.75 84.25,159.88 84.50,158.98 84.75,158.09 85.00,157.22 85.25,156.43 85.50,155.74 85.75,155.17 86.00,154.74 86.25,154.49 86.50,154.40 86.75,154.49 87.00,154.76 87.25,155.18 87.50,155.76 87.75,156.46 88.00,157.25 88.25,158.12 88.50,159.02 88.75,159.91 89.00,160.78 89.25,161.57 89.50,162.26 89.75,162.83 90.00,163.26" fill="none" stroke="#45b5b5" stroke-width="1.5"/></svg><circle cx="82" cy="172" r="4.3" fill="#7c7c7c"/><path d="M74.5 174.5 L82 178.2 L74.5 182 Z M89.5 174.5 L82 178.2 L89.5 182 Z" fill="#8a8a8a" stroke="#6a6a6a" stroke-width="0.5"/><path d="M80 183.5 L86 190 L80 196.5 L74 190 Z" fill="#dcdcdc" stroke="#8a8a8a" stroke-width="0.8"/><path d="M80 183.5 V196.5 M74 190 H86" stroke="#8a8a8a" stroke-width="0.6"/><path d="M80 196.5 L83 199 L77 199 Z" fill="#dcdcdc" stroke="#8a8a8a" stroke-width="0.6"/><g transform="translate(81.8 206.8)" fill="#d8e830"><ellipse cx="0" cy="-4.3" rx="1.9" ry="2.6" transform="rotate(0)"/><ellipse cx="0" cy="-4.3" rx="1.9" ry="2.6" transform="rotate(90)"/><ellipse cx="0" cy="-4.3" rx="1.9" ry="2.6" transform="rotate(180)"/><ellipse cx="0" cy="-4.3" rx="1.9" ry="2.6" transform="rotate(270)"/><path d="M-0.8 -3 H0.8 V3 H-0.8Z M-3 -0.8 V0.8 H3 V-0.8Z"/><circle r="1.7" fill="#d02020"/></g><rect x="75" y="215.5" width="14.2" height="15" rx="5.5" fill="url(#grr)" stroke="#3a3a3a" stroke-width="0.7"/><rect x="75.8" y="232.3" width="12.9" height="13.4" rx="2.5" fill="url(#grr)" stroke="#4a4a4a" stroke-width="0.6"/><path d="M79.2 247 L85 256 L73.5 256 Z" fill="#d8d8d8" stroke="#9a9a9a" stroke-width="0.7"/><rect x="249.5" y="85.5" width="10" height="10" rx="2" fill="none" stroke="#8a857f"/><rect x="253" y="87.5" width="4.5" height="4.5" fill="none" stroke="#6a655f" stroke-width="1"/><rect x="251.5" y="89.5" width="4.5" height="4.5" fill="#efebe7" stroke="#6a655f" stroke-width="1"/><rect x="263.5" y="85.5" width="10" height="10" rx="2" fill="none" stroke="#8a857f"/><path d="M265.8 87.8 L271.2 93.2 M271.2 87.8 L265.8 93.2" stroke="#55504a" stroke-width="2.3"/><rect x="249.5" y="281.5" width="10" height="10" rx="2" fill="none" stroke="#8a857f"/><rect x="253" y="283.5" width="4.5" height="4.5" fill="none" stroke="#6a655f" stroke-width="1"/><rect x="251.5" y="285.5" width="4.5" height="4.5" fill="#efebe7" stroke="#6a655f" stroke-width="1"/><rect x="263.5" y="281.5" width="10" height="10" rx="2" fill="none" stroke="#8a857f"/><path d="M265.8 283.8 L271.2 289.2 M271.2 283.8 L265.8 289.2" stroke="#55504a" stroke-width="2.3"/><path d="M264.5 110.5 L268.5 106.5 L272.5 110.5 Z" fill="#505050"/><path d="M264.5 247 L272 247 L268.25 251 Z" fill="#505050"/><path d="M39 259.5 L39 267 L35 263.25 Z" fill="#505050"/><path d="M252 259.5 L252 267 L256 263.25 Z" fill="#505050"/><path d="M264.5 306.5 L268.5 302.5 L272.5 306.5 Z" fill="#505050"/><path d="M264.5 506 L272 506 L268.25 510 Z" fill="#505050"/><path d="M36 333 L45 333 L40.5 338 Z" fill="#3a3a3a"/><path d="M38 457 L43 461.5 L38 466 Z" fill="#3a3a3a"/></svg><!-- DOCK END -->
<!-- ===== MDI subwindow ===== -->
<div class="a" style="left:282px;top:81px;width:300px;height:232px;background:#f4f1ed;border:1px solid #7d7873;border-top:none;border-radius:6px 6px 0 0;box-shadow:1px 1px 0 #9a958f"></div>
<div class="a" style="left:282px;top:81px;width:300px;height:24px;border-radius:6px 6px 0 0;background:linear-gradient(#1d4676 0,#1d4676 1px,#3d92dc 1px,#3a8bd6 8px,#3684cd 22px,#1d4676 23px,#1d4676 24px)"></div>
<div class="a" style="left:286px;top:105px;width:291px;height:205px;border:1px solid #6f6b66"></div>
<div class="a grid" style="left:287px;top:105px;width:289px;height:204px;background-position:0 0"></div>
<div class="a" style="left:307px;top:105px;width:250px;height:202px;background:#fff"></div>
<svg class="a" style="left:287px;top:84px" width="18" height="18">
<rect x="0.5" y="0.5" width="17" height="17" fill="#d8d8d8" stroke="#9a9a9a"/>
<rect x="1" y="1" width="16" height="1.6" fill="#6a9ab0"/>
<path d="M2.5 10.5 L5.8 3.5 L9 10.5 Z" fill="#5ac85a" stroke="#3a9a3a" stroke-width="0.5"/>
<text x="10" y="9.5" font-size="8.5" font-weight="bold" font-style="italic" font-family="Liberation Sans" fill="#1a1a1a">T</text>
<rect x="1.5" y="11.5" width="15" height="5" fill="#ececec"/>
<text x="2" y="16" font-size="4.8" font-family="Liberation Sans" fill="#444">Value</text>
</svg>
<div class="t" style="left:309px;top:86px;color:#fff;letter-spacing:0.45px;text-shadow:1px 1px 0 #102a48">Widget: /wlb_CM101/wdg_elCoo...</div>
<div class="swb" style="left:518px"><div class="a" style="left:4px;top:9px;width:8px;height:3px;background:#fff"></div></div>
<div class="swb" style="left:538px"><div class="a" style="left:4px;top:4px;width:9px;height:8px;border:2px solid #fff"></div></div>
<div class="swb" style="left:558px"><svg class="a" style="left:0;top:0" width="16" height="16"><path d="M4.5 4.5L11.5 11.5M11.5 4.5L4.5 11.5" stroke="#fff" stroke-width="2.4"/></svg></div>

<svg class="a" style="left:0;top:0" width="794" height="579" viewBox="0 0 794 579">
<g stroke="#000" stroke-width="1" fill="#d2d2d2">
<path d="M432.5 127.5 L512.5 187.5 L432.5 247.5 L352.5 187.5 Z"/>
<path d="M432.5 247.5 L482.8 272 L382.2 272 Z"/>
</g>
<path d="M432.5 128 V247 M353 187.5 H512" stroke="#000" stroke-width="1"/>
<g transform="translate(432.3 186.8)" fill="#f6f62a" stroke="#1f8f94" stroke-width="1">
<path d="M-4.8 -9 L-10.2 -29 Q-10.6 -36 -5.2 -39.6 Q0 -42 5.2 -39.6 Q10.6 -36 10.2 -29 L4.8 -9 Z"/>
<path d="M-4.8 -9 L-10.2 -29 Q-10.6 -36 -5.2 -39.6 Q0 -42 5.2 -39.6 Q10.6 -36 10.2 -29 L4.8 -9 Z" transform="rotate(90)"/>
<path d="M-4.8 -9 L-10.2 -29 Q-10.6 -36 -5.2 -39.6 Q0 -42 5.2 -39.6 Q10.6 -36 10.2 -29 L4.8 -9 Z" transform="rotate(180)"/>
<path d="M-4.8 -9 L-10.2 -29 Q-10.6 -36 -5.2 -39.6 Q0 -42 5.2 -39.6 Q10.6 -36 10.2 -29 L4.8 -9 Z" transform="rotate(270)"/>
<circle r="9.4" fill="#ee3434"/>
</g>
<path d="M432.5 146 V227 M392 187.5 H473" stroke="#000" stroke-width="1" stroke-opacity="0.5"/>
<path d="M432.5 177.5 V196.5 M423 187.5 H442" stroke="#000" stroke-width="1" stroke-opacity="0.5"/>
</svg>
<div class="a" style="left:312px;top:128.5px;width:70px;text-align:center;font-weight:bold;font-size:13.5px;letter-spacing:0.35px;line-height:16px">300.25<br>deg.C</div>
<div class="a" style="left:482px;top:128.5px;width:70px;text-align:center;font-weight:bold;font-size:13.5px;letter-spacing:0.35px;line-height:16px">300.25<br>deg.C</div>
<svg class="a" style="left:0;top:0" width="794" height="579"><g fill="#8ef08e" stroke="#000" stroke-width="1">
<rect x="479.5" y="124.5" width="5" height="5"/><rect x="514.5" y="124.5" width="5" height="5"/><rect x="549.5" y="124.5" width="5" height="5"/>
<rect x="479.5" y="141.5" width="5" height="5"/><rect x="549.5" y="141.5" width="5" height="5"/>
<rect x="479.5" y="158.5" width="5" height="5"/><rect x="514.5" y="158.5" width="5" height="5"/><rect x="549.5" y="158.5" width="5" height="5"/>
</g></svg>
<!-- bottom toolbar + status -->
<div class="a" style="left:4px;top:517px;width:786px;height:35px;background:linear-gradient(#fbf9f6,#f6f3ef 40%,#efebe7)"></div>
<div class="a" style="left:4px;top:516px;width:786px;height:1px;background:#bdb8b2"></div>
<div class="a" style="left:4px;top:552px;width:786px;height:1px;background:#bdb8b2"></div><div class="a" style="left:4px;top:553px;width:786px;height:1px;background:#f8f6f3"></div><div class="a" style="left:4px;top:574px;width:786px;height:1px;background:#f8f4ee"></div>
<!-- BOTTOM START --><svg class="a" style="left:0;top:0" width="794" height="579"><rect x="9" y="526" width="1" height="1" fill="#9a958f"/><rect x="10" y="527" width="1" height="1" fill="#fff"/><rect x="12" y="526" width="1" height="1" fill="#9a958f"/><rect x="13" y="527" width="1" height="1" fill="#fff"/><rect x="9" y="529" width="1" height="1" fill="#9a958f"/><rect x="10" y="530" width="1" height="1" fill="#fff"/><rect x="12" y="529" width="1" height="1" fill="#9a958f"/><rect x="13" y="530" width="1" height="1" fill="#fff"/><rect x="9" y="532" width="1" height="1" fill="#9a958f"/><rect x="10" y="533" width="1" height="1" fill="#fff"/><rect x="12" y="532" width="1" height="1" fill="#9a958f"/><rect x="13" y="533" width="1" height="1" fill="#fff"/><rect x="9" y="535" width="1" height="1" fill="#9a958f"/><rect x="10" y="536" width="1" height="1" fill="#fff"/><rect x="12" y="535" width="1" height="1" fill="#9a958f"/><rect x="13" y="536" width="1" height="1" fill="#fff"/><rect x="9" y="538" width="1" height="1" fill="#9a958f"/><rect x="10" y="539" width="1" height="1" fill="#fff"/><rect x="12" y="538" width="1" height="1" fill="#9a958f"/><rect x="13" y="539" width="1" height="1" fill="#fff"/><rect x="9" y="541" width="1" height="1" fill="#9a958f"/><rect x="10" y="542" width="1" height="1" fill="#fff"/><rect x="12" y="541" width="1" height="1" fill="#9a958f"/><rect x="13" y="542" width="1" height="1" fill="#fff"/><rect x="22.3" y="524.3" width="15.5" height="15.5" fill="url(#ggry2)" stroke="#a8a8a8" stroke-width="0.6"/><rect x="26.3" y="527.3" width="15.7" height="16.5" fill="url(#gblu2)" stroke="#4a4ae0" stroke-width="0.6"/><rect x="57.3" y="527.3" width="15.7" height="16.5" fill="url(#gblu2)" stroke="#4a4ae0" stroke-width="0.6"/><rect x="53.3" y="524.3" width="15.5" height="15.5" fill="url(#ggry2)" stroke="#a8a8a8" stroke-width="0.6"/><rect x="83.3" y="523.3" width="10.5" height="10.3" fill="url(#ggry2)" stroke="#a8a8a8" stroke-width="0.6"/><rect x="89.6" y="529.3" width="9.5" height="9.8" fill="url(#gblu2)" stroke="#4a4ae0" stroke-width="0.6"/><rect x="94.3" y="534.3" width="10.5" height="9.8" fill="url(#ggry2)" stroke="#a8a8a8" stroke-width="0.6"/><rect x="114.3" y="523.3" width="10.5" height="10.3" fill="url(#ggry2)" stroke="#a8a8a8" stroke-width="0.6"/><rect x="120.6" y="529.3" width="9.5" height="9.8" fill="url(#gblu2)" stroke="#4a4ae0" stroke-width="0.6"/><rect x="125.3" y="534.3" width="10.5" height="9.8" fill="url(#ggry2)" stroke="#a8a8a8" stroke-width="0.6"/><rect x="144" y="525" width="1" height="17" fill="#c8c3bd"/><rect x="145" y="525" width="1" height="17" fill="#fff"/><rect x="152.5" y="523.5" width="2" height="21" fill="#000"/><rect x="156" y="525" width="15" height="7" fill="url(#gyel)" stroke="#d8b020" stroke-width="0.6"/><rect x="156" y="534" width="17.7" height="9" fill="url(#gbar)" stroke="#5050e8" stroke-width="0.6"/><rect x="193.5" y="523" width="1.3" height="21.5" fill="#000"/><rect x="186" y="525" width="15" height="7" fill="url(#gyel)" stroke="#d8b020" stroke-width="0.6"/><rect x="185" y="534" width="18" height="9" fill="url(#gbar)" stroke="#5050e8" stroke-width="0.6"/><rect x="218" y="525" width="14" height="7" fill="url(#gyel)" stroke="#d8b020" stroke-width="0.6"/><rect x="214.8" y="534" width="17.2" height="9" fill="url(#gbar)" stroke="#5050e8" stroke-width="0.6"/><rect x="233.5" y="523.5" width="2" height="21" fill="#000"/><rect x="245.5" y="523" width="21" height="2" fill="#000"/><rect x="247.4" y="525.5" width="8" height="15.5" fill="url(#gyel)" stroke="#d8b020" stroke-width="0.6"/><rect x="257.4" y="525.5" width="7.2" height="18.5" fill="url(#gbar)" stroke="#5050e8" stroke-width="0.6"/><rect x="275.5" y="533.5" width="22" height="1.3" fill="#000"/><rect x="277.3" y="527" width="8.7" height="14" fill="url(#gyel)" stroke="#d8b020" stroke-width="0.6"/><rect x="288" y="525.8" width="7.7" height="18.2" fill="url(#gbar)" stroke="#5050e8" stroke-width="0.6"/><rect x="309" y="527" width="8.7" height="15" fill="url(#gyel)" stroke="#d8b020" stroke-width="0.6"/><rect x="319" y="524" width="7.8" height="18" fill="url(#gbar)" stroke="#5050e8" stroke-width="0.6"/><rect x="307.7" y="542.5" width="21" height="2" fill="#000"/></svg><!-- BOTTOM END -->
<svg class="a" style="left:0;top:0" width="794" height="579"><rect x="778" y="572" width="1.2" height="1.2" fill="#9a958f"/><rect x="781" y="572" width="1.2" height="1.2" fill="#9a958f"/><rect x="784" y="572" width="1.2" height="1.2" fill="#9a958f"/><rect x="787" y="572" width="1.2" height="1.2" fill="#9a958f"/><rect x="781" y="569" width="1.2" height="1.2" fill="#9a958f"/><rect x="784" y="569" width="1.2" height="1.2" fill="#9a958f"/><rect x="787" y="569" width="1.2" height="1.2" fill="#9a958f"/><rect x="784" y="566" width="1.2" height="1.2" fill="#9a958f"/><rect x="787" y="566" width="1.2" height="1.2" fill="#9a958f"/><rect x="787" y="563" width="1.2" height="1.2" fill="#9a958f"/></svg>
<div class="t" style="left:632px;top:558px">100%</div>
<div class="t" style="left:673px;top:558px">*</div>
<div class="t" style="left:685px;top:558px;letter-spacing:0.4px">Resize</div>
<div class="t" style="left:730.5px;top:558px">.</div>
<div class="t" style="left:740px;top:557px;color:#e00;letter-spacing:1.4px">root</div>
</div></body></html>
